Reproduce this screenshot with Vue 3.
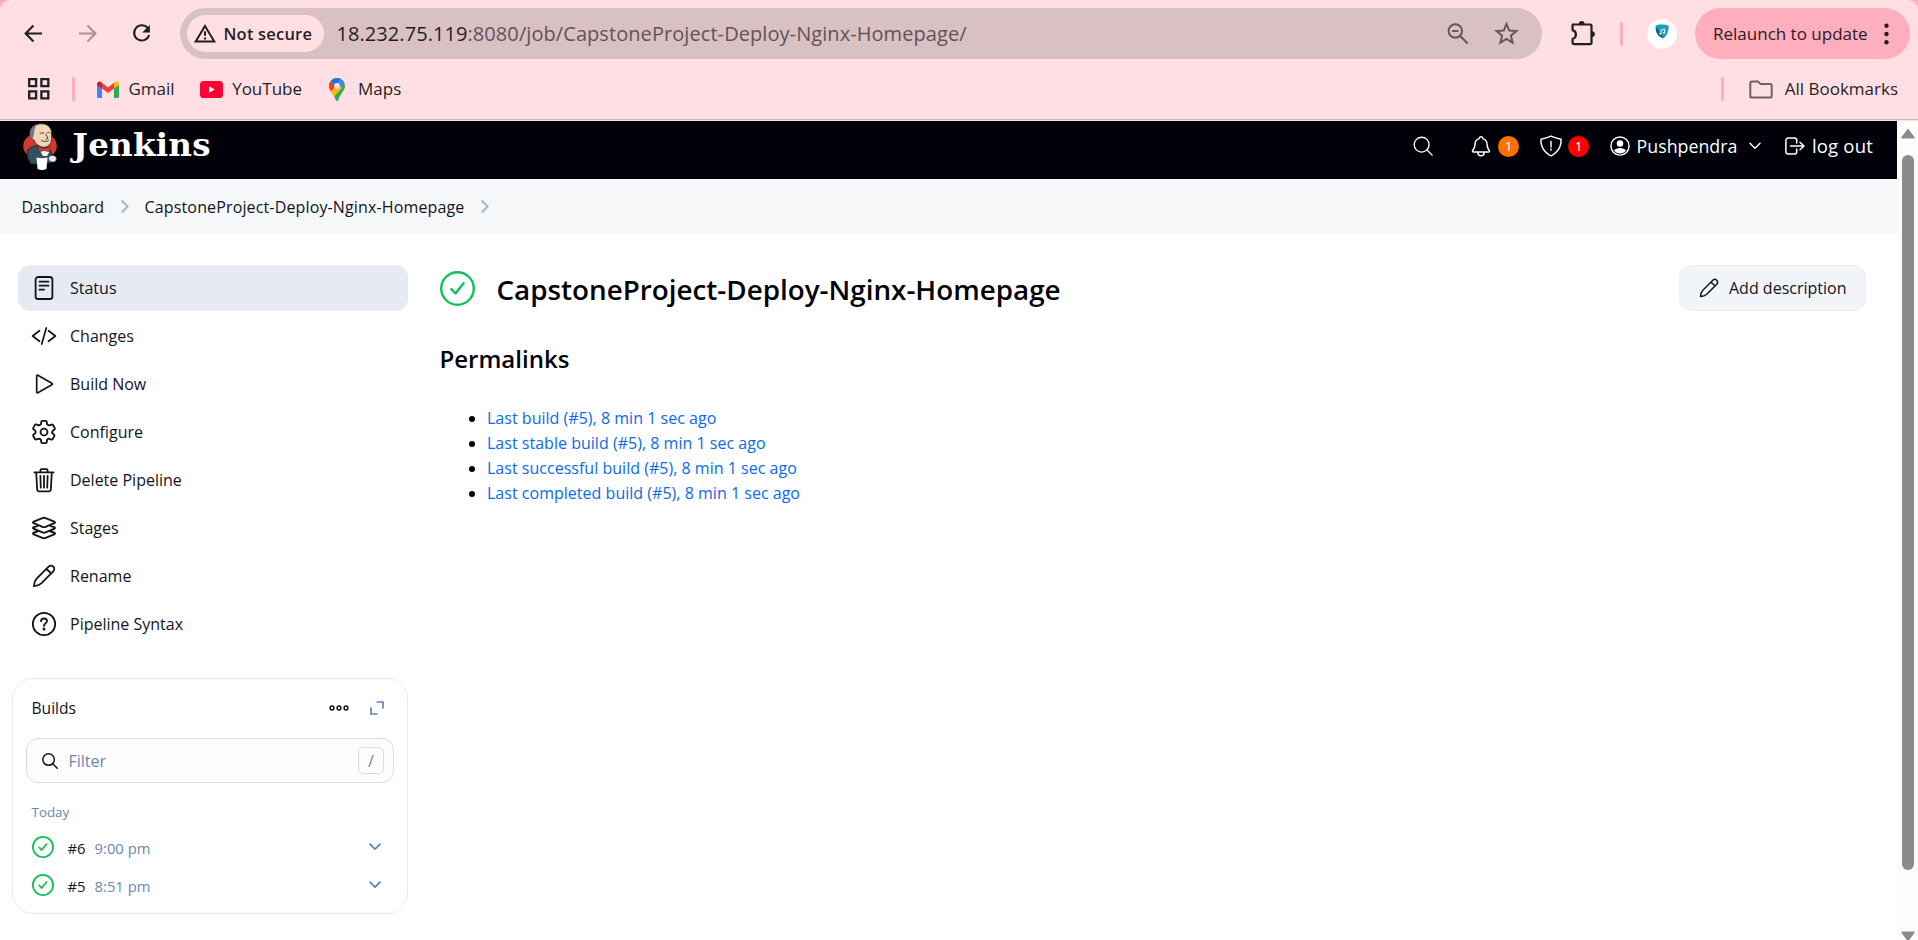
<script setup>
const tasks = [
  { label: 'Status', cls: 'status', active: true, box: '0 0 24 24', art: '<rect x="3.6" y="1" width="16.8" height="22" rx="2.6"/><path d="M7.5 5.7h9M7.5 9.7h9M7.5 13.7h4.5"/>' },
  { label: 'Changes', cls: 'ion', box: '0 0 512 512', art: '<path d="M160 368L12 256l148-112M352 368l148-112-148-112M304 84l-96 344"/>' },
  { label: 'Build Now', cls: 'ion', box: '0 0 512 512', art: '<path d="M100 82v348c0 14 12 20 25 13l298-169c15-9 15-27 0-36L125 69c-13-7-25-1-25 13z"/>' },
  { label: 'Configure', cls: 'ion', box: '20 20 472 472', art: '<circle cx="256" cy="256" r="68"/><path d="M416.39 256a154.34 154.34 0 01-1.53 20.79l40 31a22 22 0 015 28l-34 59a22 22 0 01-27 9l-44.9-16a16.11 16.11 0 00-15.17 1.75A164.48 164.48 0 01325 400.8a15.94 15.94 0 00-8.82 12.14l-6 42a22 22 0 01-22 19h-64a22 22 0 01-22-19l-6-42a16.07 16.07 0 00-9-12.22 155.3 155.3 0 01-21.46-12.57 16 16 0 00-15.11-1.71l-44.89 16a22 22 0 01-27-9l-34-59a22 22 0 015-28l34-25a16.05 16.05 0 006-14.08c-.36-4.17-.58-8.33-.58-12.5s.21-8.27.58-12.35a16 16 0 00-6.07-13.94l-34-25a22 22 0 01-5-28l34-59a22 22 0 0127-9l44.9 16a16.11 16.11 0 0015.17-1.75A164.48 164.48 0 01187 111.2a15.94 15.94 0 008.82-12.14l6-42a22 22 0 0122-19h64a22 22 0 0122 19l6 42a16.07 16.07 0 009 12.22 155.3 155.3 0 0121.46 12.57 16 16 0 0015.11 1.71l44.89-16a22 22 0 0127 9l34 59a22 22 0 01-5 28l-34 25a16.05 16.05 0 00-6.05 14.08c.33 4.14.16 8.3.16 12.47z"/>' },
  { label: 'Delete Pipeline', cls: 'ion', box: '16 16 480 480', art: '<path d="M100 112l20 340c1 18 14 30 32 30h208c18 0 31-12 32-30l20-340M64 104h384M184 104V62a24 24 0 0124-24h96a24 24 0 0124 24v42M256 176v234M184 176l8 234M328 176l-8 234"/>' },
  { label: 'Stages', cls: 'ion', box: '30 30 452 452', art: '<path d="M450 137L285 69c-16-7-42-7-58 0L62 137c-17 8-17 21 0 29l164 67c17 8 44 8 61 0l163-67c17-8 17-21 0-29zM130 218l-68 23c-17 8-17 21 0 29l164 67c17 8 44 8 61 0l163-67c17-8 17-21 0-29l-68-23M130 322l-68 23c-17 8-17 21 0 29l164 67c17 8 44 8 61 0l163-67c17-8 17-21 0-29l-68-23"/>' },
  { label: 'Rename', cls: 'pencil', box: '0 0 24 24', art: '<path d="M1.800 22.200C2 19 2.700 16.700 4.600 14.700L16.600 2.700a3.300 3.300 0 0 1 4.700 4.700L9.300 19.400C7.300 21.300 5 22 1.800 22.200zM14.500 4.800l4.700 4.700"/>' },
  { label: 'Pipeline Syntax', cls: 'help', box: '0 0 24 24', art: '<circle cx="12" cy="12" r="11.200"/><path d="M9 9.200c.1-1.800 1.300-2.700 3-2.700s3 1 3 2.600c0 1.300-.7 1.900-1.600 2.500-1 .6-1.400 1.100-1.400 2.300"/><circle cx="12" cy="17" r=".6"/>' },
]
const links = [
  'Last build (#5), 8 min 1 sec ago',
  'Last stable build (#5), 8 min 1 sec ago',
  'Last successful build (#5), 8 min 1 sec ago',
  'Last completed build (#5), 8 min 1 sec ago',
]
const builds = [
  { id: '#6', time: '9:00 pm' },
  { id: '#5', time: '8:51 pm' },
]
</script>

<template>
  <div class="window">
    <header class="chrome">
      <div class="sheet">
        <div class="toolbar">
          <svg class="nav back" viewBox="0 0 20 20"><path d="M19 10H2M10 1.500L1.700 10l8.300 8.500" /></svg>
          <svg class="nav fwd" viewBox="0 0 20 20"><path d="M1 10h17M10 1.500l8.300 8.500-8.300 8.500" /></svg>
          <svg class="nav reload" viewBox="0 0 20 20"><path d="M16.500 4.300A8 8 0 1 0 18 11.500" /><path class="solid" d="M18.800 1v8h-8z" /></svg>
          <div class="omnibox">
            <div class="chip">
              <svg class="warn" viewBox="0 0 22 19"><path d="M11 2L20.300 17.600H1.700z" /><path d="M11 7.200v4.600M11 13.600v2" /></svg>
              <span class="t secure">Not secure</span>
            </div>
            <span class="t url"><b>18.232.75.119</b>:8080/job/CapstoneProject-Deploy-Nginx-Homepage/</span>
            <svg class="zoomout" viewBox="0 0 22 22"><circle cx="8.300" cy="8" r="6.700" /><path d="M13.200 13l7.500 7.500M5.200 8h6.200" /></svg>
            <svg class="star" viewBox="0 0 24 24"><path d="M12 2.800l2.600 6.400 6.900.5-5.300 4.400 1.700 6.700L12 17.200l-5.900 3.600 1.700-6.700-5.300-4.400 6.900-.5z" /></svg>
          </div>
          <svg class="puzzle" viewBox="0 0 26 26"><path d="M2.600 4.500h17.600a1.300 1.300 0 0 1 1.300 1.300v17.100a1.300 1.300 0 0 1-1.300 1.300H3.900a1.300 1.300 0 0 1-1.300-1.300v-4.200c4.400-1.200 4.400-7.400 0-8.600z" /><path class="solid" d="M8.800 4a2.900 2.900 0 0 1 5.800 0zM22 11.200a2.900 2.900 0 0 1 0 5.800z" /></svg>
          <i class="sep"></i>
          <svg class="avatar" viewBox="0 0 30 30"><circle cx="15" cy="15" r="15" fill="#fff" /><path d="M8.500 6.500c2-1.500 10-1.500 13 0 .6 4-1 9.500-5 13-5-1.500-8.500-6.500-8-13z" fill="#1b9cc0" /><path d="M9 8.500c3 1 4 6.500 7.500 10.500-5-1-8-5-7.500-10.500z" fill="#0b5f8a" /><path d="M13.900 14.500V11l3.800-1v3.500" fill="none" stroke="#fff" stroke-width=".9" /><circle cx="13.200" cy="14.700" r="1" fill="#fff" /><circle cx="17" cy="13.700" r="1" fill="#fff" /></svg>
          <div class="relaunch">
            <span class="t">Relaunch to update</span>
            <svg class="dots" viewBox="0 0 5 22"><circle cx="2.500" cy="2.700" r="2.200" /><circle cx="2.500" cy="11" r="2.200" /><circle cx="2.500" cy="19.300" r="2.200" /></svg>
          </div>
        </div>
        <div class="bookmarks">
          <svg class="grid" viewBox="0 0 22 22"><path d="M1.200 1.200h6.900v6.900H1.200zM13.400 1.200h6.900v6.900h-6.900zM1.200 13.400h6.900v6.900H1.200zM13.400 13.400h6.900v6.900h-6.900z" /></svg>
          <i class="sep"></i>
          <svg class="gmail" viewBox="0 0 22 17"><path d="M0 3v12.500A1.500 1.500 0 0 0 1.500 17H5V6z" fill="#4285f4" /><path d="M22 3v12.500a1.500 1.500 0 0 1-1.500 1.500H17V6z" fill="#34a853" /><path d="M17 1.800L11 6.400 5 1.800v5.700l6 4.500 6-4.500z" fill="#ea4335" /><path d="M0 3.500C0 .5 2.600-.2 4.400 1.300L5 1.800v5.800L0 3.900z" fill="#c5221f" /><path d="M22 3.500c0-3-2.600-3.700-4.400-2.200l-.6.500v5.800l5-3.700z" fill="#fbbc04" /></svg>
          <span class="t gm">Gmail</span>
          <svg class="yt" viewBox="0 0 23 17"><rect width="23" height="17" rx="3.600" fill="#ff0033" /><path d="M9 5.200v6.600l5.800-3.300z" fill="#fff" /></svg>
          <span class="t ytt">YouTube</span>
          <svg class="pin" viewBox="0 0 16 23"><defs><clipPath id="pinclip"><path d="M8 0a8 8 0 0 1 8 8c0 4.500-4.500 7-6.700 14-.5 1.300-2.100 1.300-2.600 0C4.500 15 0 12.500 0 8a8 8 0 0 1 8-8z" /></clipPath></defs><g clip-path="url(#pinclip)"><path d="M0 0h16v23H0z" fill="#34a853" /><path d="M0 13L8 5l5 5-8.500 9z" fill="#fbbc04" /><path d="M12 0h4v3.500L9.500 11 6 7z" fill="#4285f4" /><path d="M0 3l7 5-6 6.500H0z" fill="#ea4335" /><path d="M0 0h12L7 7 1.500 3z" fill="#1a73e8" /></g><circle cx="8" cy="8" r="2.900" fill="#ffdfe4" /></svg>
          <span class="t mp">Maps</span>
          <i class="sep right"></i>
          <svg class="folder" viewBox="0 0 24 19"><path d="M1.300 3A1.600 1.600 0 0 1 2.900 1.400h6l2.500 2.500h9.700a1.600 1.600 0 0 1 1.600 1.600V16a1.600 1.600 0 0 1-1.600 1.600H2.900A1.600 1.600 0 0 1 1.300 16z" /></svg>
          <span class="t all">All Bookmarks</span>
        </div>
      </div>
    </header>

    <div class="viewport">
      <div class="page">
        <div class="masthead">
          <svg class="butler" viewBox="0 0 34 47">
            <ellipse cx="17" cy="23" rx="16.800" ry="13.500" fill="#d33833" />
            <path d="M5 27c3-3 6-4 10-5l10 3c4 3 5 8 4 14l-6 2H8C6 38 3 33 5 27z" fill="#335061" stroke="#16202a" stroke-width=".8" />
            <path d="M8 9C9 3 14 .6 19 .8c7 .4 10 5 9.500 11C29 18 28 22 23 24c-5 1-10-2-12-7-3-1-4-4-3-8z" fill="#f0d6b7" stroke="#2a2320" stroke-width=".7" />
            <path d="M7 13c-1-5 1-10 7-12-2 3-3 6-3 10l-1 4c-2 0-2.600-1-3-2z" fill="#77767a" />
            <path d="M17 10.500c1.300-1 3-1 4 0M24 10c1-.8 2-.8 3 0M23 11.500l2 4-2 .8M18.500 17.500c2.500 1.500 5 1.500 7 0" fill="none" stroke="#40332b" stroke-width=".9" />
            <path d="M17 28l5-1 5 1-3 5h-4z" fill="#f5f5f5" />
            <path d="M15.500 23.500l5.500 2 6-1.500v5l-6-1.500-5 1.500z" fill="#d33833" stroke="#5a1513" stroke-width=".5" />
            <path d="M13.500 34.500c4 1 7 1 11 0l-1 11.500c-3 1.200-6 1.200-9 0z" fill="#fff" />
            <path d="M25.500 34c2-2 6-2 7.500 0 1 3-.5 5-3 5s-4.500-1-4.500-5z" fill="#e8e8e8" stroke="#333" stroke-width=".6" />
          </svg>
          <span class="t brand">Jenkins</span>
          <svg class="hi h-search" viewBox="0 0 512 512"><circle cx="221" cy="221" r="190" /><path d="M360 360l130 130" /></svg>
          <svg class="hi h-bell" viewBox="0 0 512 512"><path d="M450 361c-28-34-54-55-54-144 0-79-43-113-86-127-5-2-8-6-10-11-6-20-22-37-44-37s-38 17-44 37c-2 5-5 9-10 11-43 14-86 48-86 127 0 89-26 110-54 144-11 14-2 35 17 35h354c19 0 28-21 17-35zM328 396v16a72 72 0 01-144 0v-16" /></svg>
          <span class="badge orange">1</span>
          <svg class="hi h-shield" viewBox="0 0 512 512"><path d="M490 98C400 82 337 64 256 28 175 64 112 82 22 98 6 370 240 480 256 486c16-6 250-116 234-388z" /><path d="M256 150v130" /><circle cx="256" cy="340" r="8" /></svg>
          <span class="badge red">1</span>
          <svg class="hi h-user" viewBox="0 0 24 24"><circle cx="12" cy="12" r="10.900" /><circle class="fill" cx="12" cy="9" r="3.900" /><path class="fill" d="M4.800 17.400c2.400-4.200 12-4.200 14.400 0-3.400 4.600-11 4.600-14.400 0z" /></svg>
          <span class="t user">Pushpendra</span>
          <svg class="hi h-chev" viewBox="0 0 12 8"><path d="M1 1.200l5 5 5-5" /></svg>
          <svg class="hi h-out" viewBox="0 0 20 18"><path d="M11.700 12v2.700a2.300 2.300 0 0 1-2.300 2.300H3.200A2.300 2.300 0 0 1 .9 14.700V3.300A2.300 2.300 0 0 1 3.200 1h6.200a2.300 2.300 0 0 1 2.300 2.300V6M5.500 9h13.300M15 5.200L19 9l-4 3.800" /></svg>
          <span class="t logout">log out</span>
        </div>

        <nav class="crumbs">
          <span class="t">Dashboard</span>
          <svg class="crumb" viewBox="0 0 8 13"><path d="M1.200 1l5.500 5.500L1.200 12" /></svg>
          <span class="t job">CapstoneProject-Deploy-Nginx-Homepage</span>
          <svg class="crumb last" viewBox="0 0 8 13"><path d="M1.200 1l5.500 5.500L1.200 12" /></svg>
        </nav>

        <div class="body">
          <aside>
            <ul class="tasks">
              <li v-for="t in tasks" :key="t.label" :class="{ active: t.active }">
                <svg :class="t.cls" :viewBox="t.box" v-html="t.art"></svg>
                <span class="t">{{ t.label }}</span>
              </li>
            </ul>
            <section class="card">
              <div class="cardhead">
                <span class="t">Builds</span>
                <svg class="more" viewBox="0 0 20 6"><circle cx="3" cy="3" r="1.900" /><circle cx="10" cy="3" r="1.900" /><circle cx="17" cy="3" r="1.900" /></svg>
                <svg class="expand" viewBox="0 0 14 14"><path d="M7.200 1H13v5.800M6.800 13H1V7.200" /></svg>
              </div>
              <div class="filter">
                <svg viewBox="0 0 17 17"><circle cx="7" cy="7" r="6.100" /><path d="M11.500 11.500l4.700 4.700" /></svg>
                <span class="t">Filter</span>
                <kbd>/</kbd>
              </div>
              <p class="today">Today</p>
              <div v-for="b in builds" :key="b.id" class="build">
                <svg class="ok" viewBox="0 0 22 22"><circle cx="11" cy="11" r="10.100" /><path d="M7.200 11.400l2.400 2.600 5-6" /></svg>
                <span class="t num">{{ b.id }}</span>
                <span class="t time">{{ b.time }}</span>
                <svg class="chev" viewBox="0 0 12 8"><path d="M1 1.200l5 5 5-5" /></svg>
              </div>
            </section>
          </aside>

          <main>
            <div class="titlebar">
              <svg class="bigok" viewBox="0 0 35 35"><circle cx="17.500" cy="17.500" r="16.300" /><path d="M11.300 18.200l4.200 4.300 8-10.200" /></svg>
              <h1>CapstoneProject-Deploy-Nginx-Homepage</h1>
              <button>
                <svg viewBox="0 0 24 24"><path d="M1.800 22.200C2 19 2.700 16.700 4.600 14.700L16.600 2.700a3.300 3.300 0 0 1 4.700 4.700L9.300 19.400C7.300 21.300 5 22 1.800 22.200zM14.500 4.800l4.700 4.700" /></svg>
                <span class="t">Add description</span>
              </button>
            </div>
            <h2>Permalinks</h2>
            <ul class="links">
              <li v-for="l in links" :key="l"><a class="t">{{ l }}</a></li>
            </ul>
          </main>
        </div>
      </div>
      <div class="scroll">
        <svg viewBox="0 0 14 11"><path d="M7 .5L13.500 9c.5.900 0 1.600-.9 1.600H1.400C.5 10.600 0 9.900.5 9z" /></svg>
        <div class="thumb"></div>
        <svg viewBox="0 0 14 11"><path d="M7 10.500L13.500 2c.5-.9 0-1.600-.9-1.600H1.400C.5.4 0 1.100.5 2z" /></svg>
      </div>
    </div>
  </div>
</template>

<style>
body { background: #fff; overflow: hidden; }
</style>

<style scoped>
* { box-sizing: border-box; }
.window { width: 1918px; height: 940px; overflow: hidden; display: flex; flex-direction: column; font-family: "Open Sans", "Noto Sans", sans-serif; font-size: 16px; color: #14141f; }
.t { white-space: nowrap; display: inline-block; }
svg { flex: none; fill: none; stroke: currentColor; stroke-linecap: round; stroke-linejoin: round; display: block; overflow: visible; }
.chrome { background: #ffaebd; height: 121px; flex: none; }
.sheet { background: #ffdfe4; height: 121px; border-radius: 10px 10px 0 0; position: relative; color: #1f1f24; }
.sheet::after { content: ""; position: absolute; left: 0; right: 0; top: 119px; height: 1px; background: #cdb4b8; }
.toolbar { height: 59px; padding: 8px 8px 0 24px; display: flex; align-items: center; }
.nav { width: 19px; height: 19px; stroke-width: 2.2; stroke-linecap: butt; stroke-linejoin: miter; }
.fwd { margin-left: 35px; color: #a89095; }
.reload { margin-left: 34.5px; }
.solid { fill: currentColor; stroke: none; }
.omnibox { margin-left: 29.5px; width: 1362px; height: 51px; border-radius: 26px; background: #d8c0c3; display: flex; align-items: center; padding: 0 23.5px 0 7px; }
.chip { height: 37px; width: 137px; border-radius: 19px; background: #ffdfe4; display: flex; align-items: center; padding-left: 7px; }
.warn { width: 22px; height: 19px; stroke-width: 2; stroke-linejoin: miter; stroke-linecap: butt; }
.secure { margin-left: 7.5px; font-weight: 600; font-size: 16.5px; letter-spacing: .2px; }
.url { margin-left: 12.5px; font-size: 20px; letter-spacing: .07px; color: #5f5459; }
.url b { font-weight: 400; color: #1f1f24; }
.zoomout { margin-left: auto; width: 22px; height: 22px; color: #62585b; stroke-width: 2; stroke-linecap: butt; }
.star { width: 25px; height: 25px; margin-left: 25px; color: #62585b; stroke-width: 1.9; stroke-linejoin: miter; }
.puzzle { width: 26px; height: 26px; margin: 0 0 2px 28px; stroke-width: 2.2; }
.sep { width: 3px; height: 24px; border-radius: 2px; background: #ffaebd; }
.toolbar .sep { margin-left: 24px; }
.avatar { width: 30px; height: 30px; margin-left: 24px; stroke: none; }
.relaunch { margin-left: 18px; width: 215px; height: 51px; border-radius: 26px; background: #ffaebd; display: flex; align-items: center; padding-left: 18px; font-size: 17px; color: #2b2024; }
.dots { width: 5px; height: 22px; margin-left: auto; margin-right: 21px; stroke: none; fill: #1f1f24; }
.bookmarks { height: 60px; padding: 0 20px 0 28px; display: flex; align-items: center; font-size: 17px; }
.bookmarks .t { margin-bottom: 2px; }
.grid { width: 22px; height: 22px; stroke-width: 2.3; stroke-linejoin: miter; }
.bookmarks .sep { margin-left: 22px; }
.gmail { width: 22px; height: 17px; margin-left: 22px; stroke: none; }
.gm { margin-left: 9.5px; }
.yt { width: 23px; height: 17px; margin-left: 25px; stroke: none; }
.ytt { margin-left: 9.5px; }
.pin { width: 16px; height: 23px; margin-left: 26.5px; stroke: none; }
.mp { margin-left: 13.5px; }
.bookmarks .right { margin-left: auto; }
.folder { width: 24px; height: 19px; margin-left: 25px; color: #6b6064; stroke-width: 2; }
.all { margin-left: 12px; }

.viewport { flex: 1; display: flex; min-height: 0; }
.page { width: 1897px; display: flex; flex-direction: column; }
.masthead { height: 58px; flex: none; background: #000009; color: #fff; display: flex; align-items: center; padding: 0 24px 8px 23px; }
.butler { width: 34px; height: 47px; stroke: none; }
.brand { font-family: "DejaVu Serif", serif; font-weight: 700; font-size: 32.5px; letter-spacing: .25px; margin-left: 15.5px; line-height: 40px; margin-bottom: 2px; }
.hi { stroke-width: 34; width: 20px; height: 20px; }
.h-search { margin-left: auto; }
.h-bell { width: 22px; height: 22px; margin-left: 37px; }
.h-shield { width: 22px; height: 22px; margin-left: 21px; }
.h-user { stroke-width: 1.7; margin-left: 21px; }
.user { margin-left: 6.5px; font-size: 17.8px; margin-bottom: 1px; }
.h-chev { width: 12px; height: 8px; stroke-width: 1.5; margin-left: 12px; }
.h-out { height: 18px; stroke-width: 1.5; margin-left: 24px; }
.logout { margin-left: 6.5px; font-size: 18.5px; letter-spacing: .2px; margin-bottom: 2px; }
.fill { fill: #fff; stroke: none; }
.badge { width: 21px; height: 21px; border-radius: 50%; font-size: 13.5px; display: flex; align-items: center; justify-content: center; margin-left: 6px; padding-bottom: 1px; }
.orange { background: #fe7000; }
.red { background: #fe0000; }
.crumbs { height: 55px; flex: none; background: #f5f7f9; display: flex; align-items: center; padding-left: 21.5px; }
.crumb { width: 8px; height: 13px; stroke: #a3b7d6; stroke-width: 1.9; margin: 0 16px 0 16.5px; }
.job { letter-spacing: .14px; }
.body { display: flex; flex: 1; }
aside { width: 408px; padding: 31px 0 0 12px; }
ul { list-style: none; margin: 0; padding: 0; }
.tasks { margin-left: 6px; width: 390px; display: flex; flex-direction: column; gap: 2px; }
.tasks li { height: 46px; border-radius: 12px; display: flex; align-items: center; padding-left: 14px; gap: 14px; }
.tasks .t { margin-bottom: 1px; }
.tasks .active { background: #e6eaf2; }
.tasks svg { width: 24px; height: 24px; stroke-width: 1.8; }
.tasks .ion { stroke-width: 36; }
.card { margin-top: 31px; width: 396px; height: 236px; border: 1px solid #e9ebf3; border-radius: 21px; padding: 0 13px; }
.cardhead { height: 59px; display: flex; align-items: center; padding: 0 10.5px 1px 5.5px; font-size: 15.6px; }
.more { width: 20px; height: 6px; margin-left: auto; stroke-width: 1.5; }
.expand { width: 14px; height: 14px; margin-left: 21px; stroke: #6081b3; stroke-width: 1.7; stroke-linejoin: miter; }
.filter { height: 45px; border: 1px solid #d7dceb; border-radius: 12px; background: #fdfdfe; display: flex; align-items: center; padding: 0 9px 0 15px; color: #6987b4; }
.filter svg { width: 16px; height: 16px; stroke: #14141f; stroke-width: 1.6; margin-right: 10.5px; }
kbd { margin-left: auto; width: 26px; height: 27px; border: 1px solid #d7dceb; border-radius: 5px; font: 16px "Open Sans", sans-serif; display: flex; align-items: center; justify-content: center; }
.today { margin: 19px 0 6.5px 5.5px; line-height: 20px; font-size: 13.4px; color: #6987b4; }
.build { height: 38.5px; display: flex; align-items: center; padding: 0 13px 0 6px; font-size: 14.8px; }
.ok { width: 22px; height: 22px; stroke: #12c058; stroke-width: 1.8; margin-bottom: 2px; }
.num { margin-left: 13.5px; }
.time { margin-left: 9px; color: #6987b4; }
.chev { width: 12px; height: 8px; margin-left: auto; margin-bottom: 2px; stroke: #6081b3; stroke-width: 1.7; }
main { flex: 1; padding: 31px 31px 0 32px; }
.titlebar { height: 46px; display: flex; align-items: center; }
.bigok { width: 35px; height: 35px; stroke: #12c058; stroke-width: 2.4; }
h1 { margin: 2px 0 0 21.5px; font-size: 27.8px; font-weight: 600; line-height: 40px; color: #000008; white-space: nowrap; }
button { margin-left: auto; width: 187px; height: 46px; border: 1px solid #ecf1f5; border-radius: 12px; background: #f1f4f8; display: flex; align-items: center; padding: 0 0 0 19px; font: 16px "Open Sans", sans-serif; color: #14141f; gap: 10px; }
button svg { width: 20px; height: 20px; stroke-width: 1.7; }
h2 { margin: 32px 0 0 -.5px; font-size: 24px; font-weight: 600; line-height: 32px; color: #000008; }
.links { margin-top: 31px; padding-left: 47px; list-style: disc; }
.links li { line-height: 25px; height: 25px; color: #000; }
.links a { color: #0b6aed; letter-spacing: .02px; }
.scroll { width: 21px; background: #fcfcfc; display: flex; flex-direction: column; align-items: center; padding-top: 7px; }
.scroll svg { width: 14px; height: 11px; stroke: none; fill: #8b8b8b; }
.thumb { width: 12px; height: 715px; margin: 16px 0 61px; border-radius: 6px; background: #8b8b8b; flex: none; }
</style>
